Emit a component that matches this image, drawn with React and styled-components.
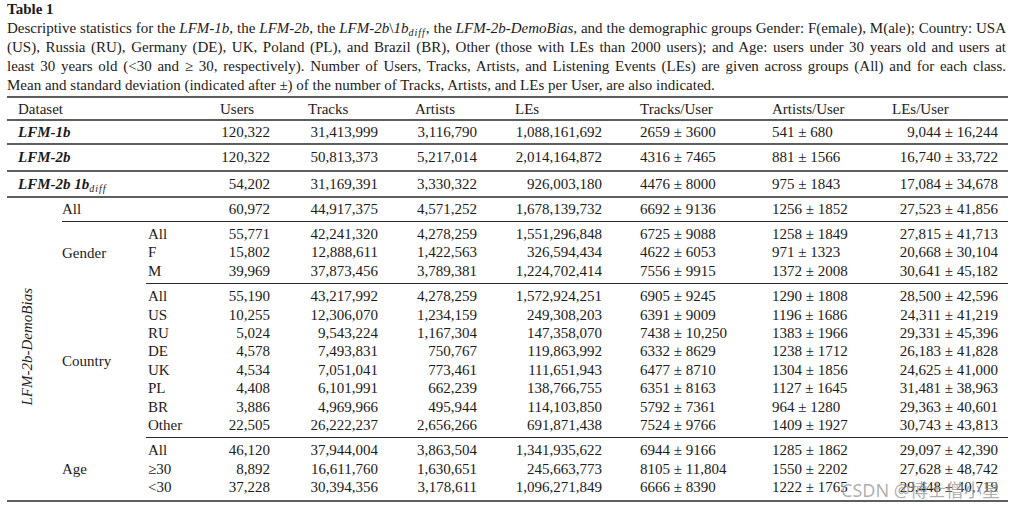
import React from 'react';
import styled, { createGlobalStyle } from 'styled-components';

const GlobalStyle = createGlobalStyle`
  body {
    margin: 0;
    background: #ffffff;
  }
`;

const columns = [
    { label: 'Users', width: 80, align: 'right', head: 20 },
    { label: 'Tracks', width: 108, align: 'right', head: 28 },
    { label: 'Artists', width: 99, align: 'right', head: 27 },
    { label: 'LEs', width: 125, align: 'right', head: 28 },
    { label: 'Tracks/User', width: 150, align: 'left', head: 28 },
    { label: 'Artists/User', width: 120, align: 'left', head: 10 },
    { label: 'LEs/User', width: 126, align: 'right', head: 10 },
];

const datasets = [
    { name: 'LFM-1b', height: 22, values: ['120,322', '31,413,999', '3,116,790', '1,088,161,692', '2659 ± 3600', '541 ± 680', '9,044 ± 16,244'] },
    { name: 'LFM-2b', height: 25, values: ['120,322', '50,813,373', '5,217,014', '2,014,164,872', '4316 ± 7465', '881 ± 1566', '16,740 ± 33,722'] },
    { name: 'LFM-2b 1b', sub: 'diff', height: 24, values: ['54,202', '31,169,391', '3,330,322', '926,003,180', '4476 ± 8000', '975 ± 1843', '17,084 ± 34,678'] },
];

const demoAll = ['60,972', '44,917,375', '4,571,252', '1,678,139,732', '6692 ± 9136', '1256 ± 1852', '27,523 ± 41,856'];

const groups = [
    {
        name: 'Gender',
        rows: [
            ['All', '55,771', '42,241,320', '4,278,259', '1,551,296,848', '6725 ± 9088', '1258 ± 1849', '27,815 ± 41,713'],
            ['F', '15,802', '12,888,611', '1,422,563', '326,594,434', '4622 ± 6053', '971 ± 1323', '20,668 ± 30,104'],
            ['M', '39,969', '37,873,456', '3,789,381', '1,224,702,414', '7556 ± 9915', '1372 ± 2008', '30,641 ± 45,182'],
        ],
    },
    {
        name: 'Country',
        rows: [
            ['All', '55,190', '43,217,992', '4,278,259', '1,572,924,251', '6905 ± 9245', '1290 ± 1808', '28,500 ± 42,596'],
            ['US', '10,255', '12,306,070', '1,234,159', '249,308,203', '6391 ± 9009', '1196 ± 1686', '24,311 ± 41,219'],
            ['RU', '5,024', '9,543,224', '1,167,304', '147,358,070', '7438 ± 10,250', '1383 ± 1966', '29,331 ± 45,396'],
            ['DE', '4,578', '7,493,831', '750,767', '119,863,992', '6332 ± 8629', '1238 ± 1712', '26,183 ± 41,828'],
            ['UK', '4,534', '7,051,041', '773,461', '111,651,943', '6477 ± 8710', '1304 ± 1856', '24,625 ± 41,000'],
            ['PL', '4,408', '6,101,991', '662,239', '138,766,755', '6351 ± 8163', '1127 ± 1645', '31,481 ± 38,963'],
            ['BR', '3,886', '4,969,966', '495,944', '114,103,850', '5792 ± 7361', '964 ± 1280', '29,363 ± 40,601'],
            ['Other', '22,505', '26,222,237', '2,656,266', '691,871,438', '7524 ± 9766', '1409 ± 1927', '30,743 ± 43,813'],
        ],
    },
    {
        name: 'Age',
        rows: [
            ['All', '46,120', '37,944,004', '3,863,504', '1,341,935,622', '6944 ± 9166', '1285 ± 1862', '29,097 ± 42,390'],
            ['≥30', '8,892', '16,611,760', '1,630,651', '245,663,773', '8105 ± 11,804', '1550 ± 2202', '27,628 ± 48,742'],
            ['<30', '37,228', '30,394,356', '3,178,611', '1,096,271,849', '6666 ± 8390', '1222 ± 1765', '29,448 ± 40,719'],
        ],
    },
];

const demoRowCount = 1 + groups.reduce((n, g) => n + g.rows.length, 0);

const ValueCells = ({ values, first, last }) =>
    values.map((v, i) => (
        <Cell
            key={i}
            $align={columns[i].align}
            $padL={columns[i].align === 'left' ? columns[i].head : 0}
            $first={first}
            $last={last}
        >
            {v}
        </Cell>
    ));

const App = () => {
    return (
        <Page>
            <GlobalStyle />
            <Title>Table 1</Title>
            <Caption>
                <Line>
                    Descriptive statistics for the <i>LFM-1b</i>, the <i>LFM-2b</i>, the <i>LFM-2b</i>\<i>1b<Sub>diff</Sub></i>, the <i>LFM-2b-DemoBias</i>, and the demographic groups Gender: F(emale), M(ale); Country: USA
                </Line>
                <Line>
                    (US), Russia (RU), Germany (DE), UK, Poland (PL), and Brazil (BR), Other (those with LEs than 2000 users); and Age: users under 30 years old and users at
                </Line>
                <Line>
                    least 30 years old (&lt;30 and ≥ 30, respectively). Number of Users, Tracks, Artists, and Listening Events (LEs) are given across groups (All) and for each class.
                </Line>
                <Line $last>
                    Mean and standard deviation (indicated after ±) of the number of Tracks, Artists, and LEs per User, are also indicated.
                </Line>
            </Caption>
            <Table>
                <colgroup>
                    <col style={{ width: 55 }} />
                    <col style={{ width: 84 }} />
                    <col style={{ width: 54 }} />
                    {columns.map((c) => (
                        <col key={c.label} style={{ width: c.width }} />
                    ))}
                </colgroup>
                <tbody>
                    <tr>
                        <HeadCell colSpan={3} $padL={11}>Dataset</HeadCell>
                        {columns.map((c) => (
                            <HeadCell key={c.label} $padL={c.head}>{c.label}</HeadCell>
                        ))}
                    </tr>
                    {datasets.map((d) => (
                        <DatasetRow key={d.name} $h={d.height}>
                            <DatasetName colSpan={3}>
                                {d.name}
                                {d.sub && <Sub>{d.sub}</Sub>}
                            </DatasetName>
                            <ValueCells values={d.values} />
                        </DatasetRow>
                    ))}
                    <DatasetRow $h={23}>
                        <SideCell rowSpan={demoRowCount}>
                            <SideLabel>LFM-2b-DemoBias</SideLabel>
                        </SideCell>
                        <Cell colSpan={2} $align="left">All</Cell>
                        <ValueCells values={demoAll} />
                    </DatasetRow>
                    {groups.map((g, gi) =>
                        g.rows.map((r, ri) => {
                            const first = ri === 0;
                            const last = ri === g.rows.length - 1;
                            return (
                                <GroupRow key={g.name + ri} $rule={first ? (gi === 0 ? 'group' : 'sub') : 'none'}>
                                    {first && <GroupCell rowSpan={g.rows.length}>{g.name}</GroupCell>}
                                    <Cell $align="left" $padL={2} $first={first} $last={last}>{r[0]}</Cell>
                                    <ValueCells values={r.slice(1)} first={first} last={last} />
                                </GroupRow>
                            );
                        })
                    )}
                </tbody>
            </Table>
            <Watermark>CSDN @博士僧小星</Watermark>
        </Page>
    );
};

const Page = styled.div`
    position: relative;
    width: 1001px;
    margin: 0 0 0 7px;
    font-family: 'Liberation Serif', 'Times New Roman', serif;
    color: #1c1a1a;
`;

const Title = styled.div`
    font-size: 15px;
    font-weight: bold;
    line-height: 19px;
`;

const Caption = styled.div`
    font-size: 15px;
    line-height: 19px;
    width: 999px;
`;

const Line = styled.div`
    text-align: justify;
    text-align-last: ${(p) => (p.$last ? 'left' : 'justify')};
`;

const Sub = styled.sub`
    font-size: 10px;
    font-style: italic;
    font-weight: normal;
    line-height: 0;
    vertical-align: -3px;
    letter-spacing: 1px;
`;

const Table = styled.table`
    width: 1001px;
    border-collapse: collapse;
    table-layout: fixed;
    margin-top: 1px;
    border-top: 2px solid #5e5e5e;
    border-bottom: 2px solid #5e5e5e;
    font-size: 15px;

    td {
        padding: 0;
        white-space: nowrap;
    }
`;

const HeadCell = styled.td`
    height: 21px;
    text-align: left;
    padding-left: ${(p) => p.$padL}px !important;
    line-height: 18px;
`;

const DatasetRow = styled.tr`
    border-top: 2px solid #5e5e5e;

    & > td {
        height: ${(p) => p.$h}px;
    }
`;

const DatasetName = styled.td`
    padding-left: 11px !important;
    font-weight: bold;
    font-style: italic;
`;

const GroupRow = styled.tr`
    & > td {
        border-top: ${(p) => (p.$rule === 'none' ? '0' : '1px solid #2a2a2a')};
    }

    & > td[rowspan] {
        border-top: ${(p) => (p.$rule === 'group' ? '1px solid #2a2a2a' : '0')};
    }
`;

const Cell = styled.td`
    text-align: ${(p) => p.$align};
    padding-left: ${(p) => (p.$align === 'left' ? p.$padL || 0 : 0)}px !important;
    padding-right: ${(p) => (p.$align === 'right' ? 10 : 0)}px !important;
    padding-top: ${(p) => (p.$first ? 3 : 0)}px !important;
    padding-bottom: ${(p) => (p.$last ? 3 : 0)}px !important;
    line-height: 18.4px;
`;

const GroupCell = styled.td`
    vertical-align: middle;
    line-height: 18px;
`;

const SideCell = styled.td`
    vertical-align: middle;
    text-align: left;
    padding-left: 13px !important;
`;

const SideLabel = styled.div`
    display: inline-block;
    writing-mode: vertical-rl;
    transform: rotate(180deg);
    font-style: italic;
    font-size: 15px;
    line-height: 15px;
`;

const Watermark = styled.div`
    position: absolute;
    right: 8px;
    bottom: 2px;
    font-family: 'Noto Sans', 'Noto Sans CJK SC', sans-serif;
    font-size: 18px;
    line-height: 20px;
    color: rgba(150, 150, 150, 0.75);
    pointer-events: none;
`;

export default App;
